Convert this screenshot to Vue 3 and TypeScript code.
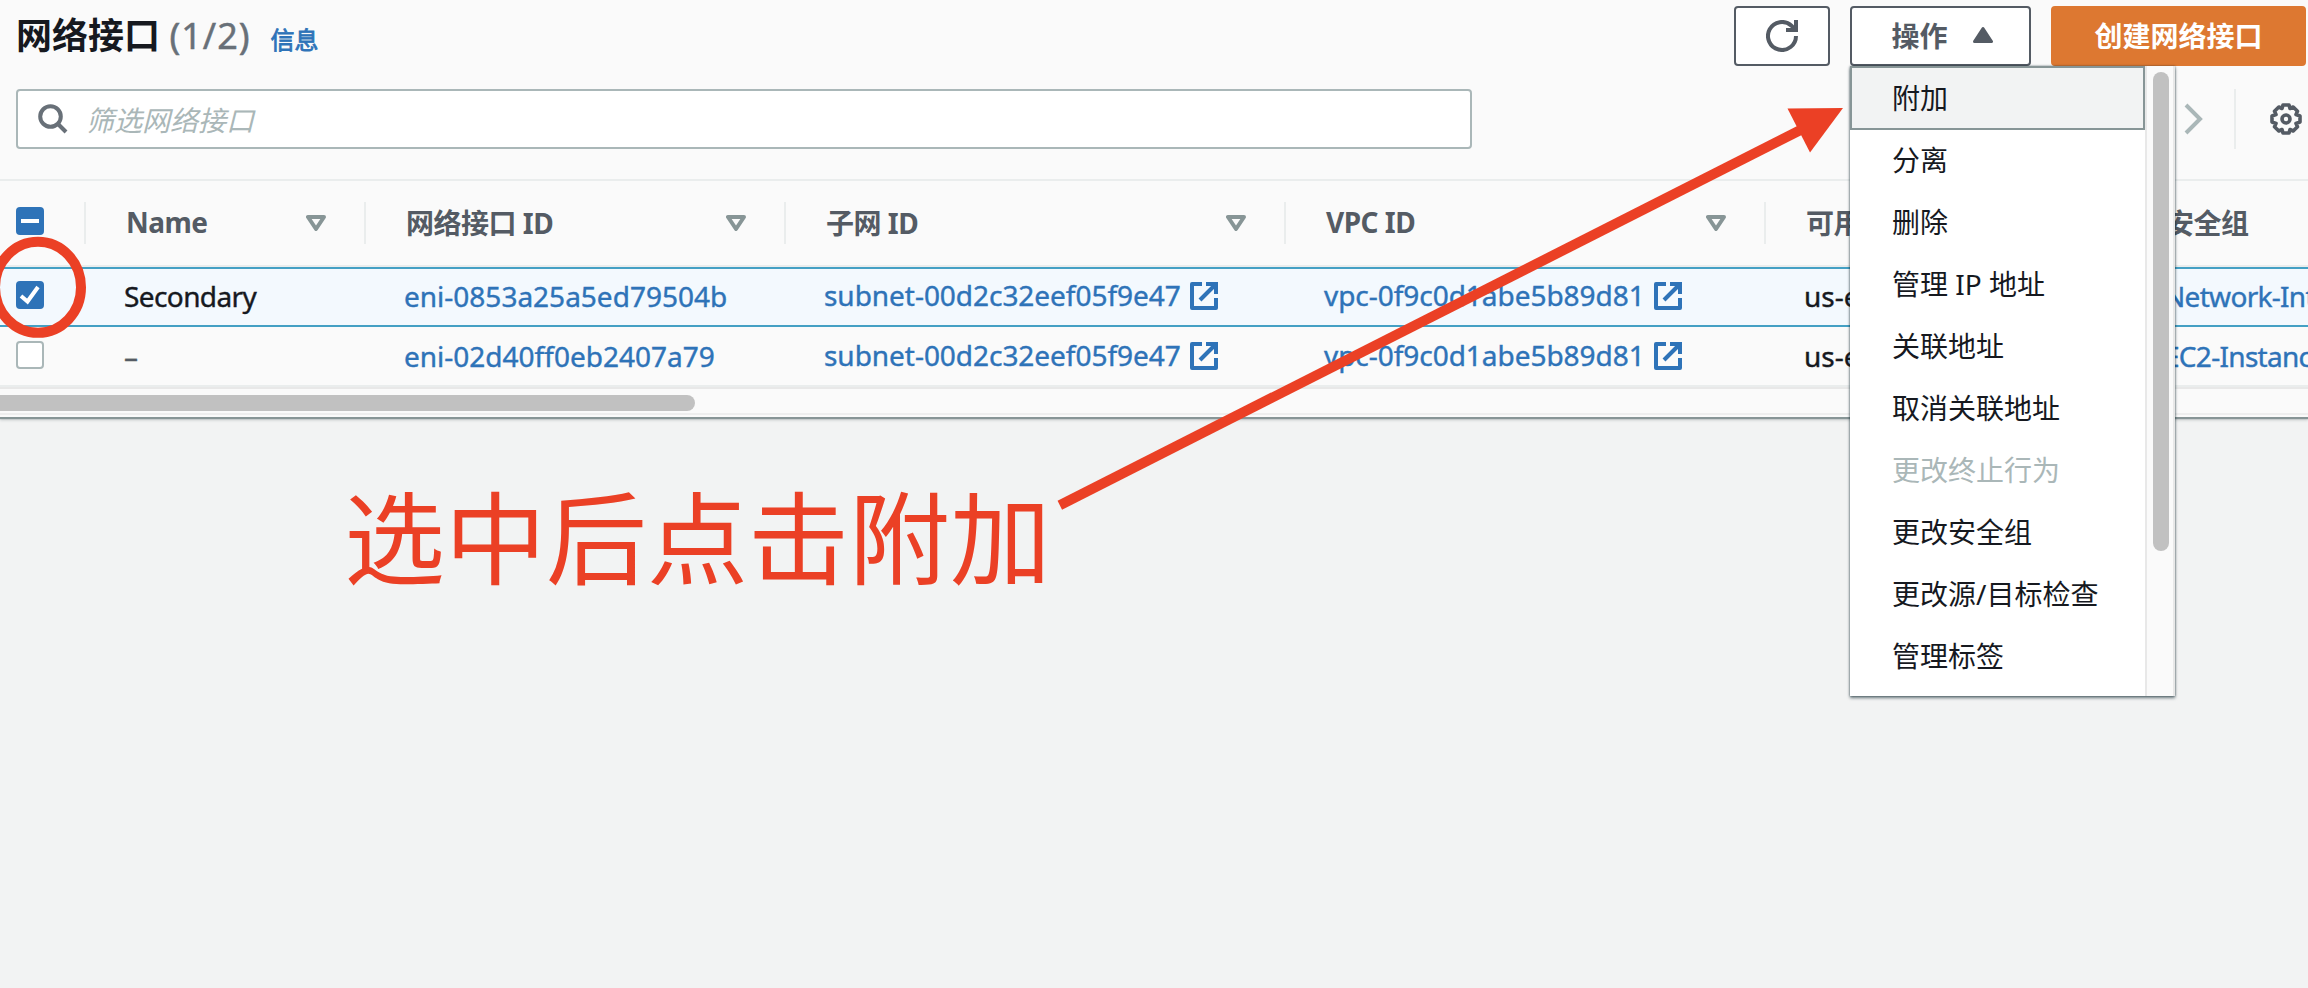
<script setup lang="ts">
interface Column {
  label: string
  sortable: boolean
}

interface NetworkInterface {
  id: string
  name: string
  subnet: string
  vpc: string
  zone: string
  group: string
  selected: boolean
}

interface MenuItem {
  label: string
  active?: boolean
  disabled?: boolean
}

const columns: Column[] = [
  { label: 'Name', sortable: true },
  { label: '网络接口 ID', sortable: true },
  { label: '子网 ID', sortable: true },
  { label: 'VPC ID', sortable: true },
  { label: '可用区', sortable: true },
  { label: '安全组', sortable: false },
]

const rows: NetworkInterface[] = [
  {
    id: 'eni-0853a25a5ed79504b',
    name: 'Secondary',
    subnet: 'subnet-00d2c32eef05f9e47',
    vpc: 'vpc-0f9c0d1abe5b89d81',
    zone: 'us-east',
    group: 'Network-Interface',
    selected: true,
  },
  {
    id: 'eni-02d40ff0eb2407a79',
    name: '–',
    subnet: 'subnet-00d2c32eef05f9e47',
    vpc: 'vpc-0f9c0d1abe5b89d81',
    zone: 'us-east',
    group: 'EC2-Instance',
    selected: false,
  },
]

const menu: MenuItem[] = [
  { label: '附加', active: true },
  { label: '分离' },
  { label: '删除' },
  { label: '管理 IP 地址' },
  { label: '关联地址' },
  { label: '取消关联地址' },
  { label: '更改终止行为', disabled: true },
  { label: '更改安全组' },
  { label: '更改源/目标检查' },
  { label: '管理标签' },
]
</script>

<template>
  <div class="page">
    <section class="panel">
      <header class="head">
        <h1 class="title">网络接口 <span class="count">(1/2)</span></h1>
        <a class="info">信息</a>
        <div class="actions">
          <button class="btn refresh" aria-label="refresh">
            <svg width="32" height="32" viewBox="0 0 32 32" fill="none" stroke="#545b64" stroke-width="4">
              <path d="M30 16A14 14 0 1 1 25.500 5.700L29 9.500" />
              <path d="M30 0V10H20" />
            </svg>
          </button>
          <div class="dropdown">
            <button class="btn toggle">
              操作
              <svg width="20" height="18" viewBox="0 0 20 18">
                <path d="M10 2.500L18.500 15.500H1.500Z" fill="#545b64" stroke="#545b64" stroke-width="3" stroke-linejoin="round" />
              </svg>
            </button>
            <div class="menu">
              <ul class="items">
                <li v-for="m in menu" :key="m.label" class="item" :class="{ active: m.active, disabled: m.disabled }">
                  {{ m.label }}
                </li>
              </ul>
              <div class="track"><div class="thumb"></div></div>
            </div>
          </div>
          <button class="btn primary">创建网络接口</button>
        </div>
      </header>

      <div class="tools">
        <div class="search">
          <svg width="30" height="30" viewBox="0 0 30 30" fill="none" stroke="#687078" stroke-width="4">
            <circle cx="12.500" cy="12.500" r="10.300" />
            <path d="M19.500 19.500L28 28" />
          </svg>
          <span class="placeholder">筛选网络接口</span>
        </div>
        <div class="prefs">
          <svg width="20" height="32" viewBox="0 0 20 32" fill="none" stroke="#aab7b8" stroke-width="4">
            <path d="M2 2L16 16L2 30" />
          </svg>
          <div class="divider"></div>
          <svg width="32" height="32" viewBox="0 0 32 32" fill="none" stroke="#545b64" stroke-width="3.600" stroke-linejoin="round">
            <path d="M13 2h6l1 3.500 3.200-1.500 4.300 4.300-1.500 3.200 4 1.500v6l-4 1.500 1.500 3.200-4.300 4.300-3.200-1.500-1 3.500h-6l-1-3.500-3.200 1.500-4.300-4.300 1.500-3.200-4-1.500v-6l4-1.500-1.500-3.200 4.300-4.300 3.200 1.500Z" />
            <circle cx="16" cy="16" r="4" />
          </svg>
        </div>
      </div>

      <div class="table">
        <div class="row thead">
          <div class="cell check">
            <span class="box on">
              <svg width="28" height="28" viewBox="0 0 28 28"><path d="M5 14H23" stroke="#fff" stroke-width="4" /></svg>
            </span>
          </div>
          <div v-for="c in columns" :key="c.label" class="cell th">
            <span class="label">{{ c.label }}</span>
            <svg v-if="c.sortable" width="20" height="16" viewBox="0 0 20 16">
              <path d="M2 2H18L10 14Z" fill="none" stroke="#879596" stroke-width="4" stroke-linejoin="round" />
            </svg>
          </div>
        </div>
        <div v-for="r in rows" :key="r.id" class="row body" :class="{ selected: r.selected }">
          <div class="cell check">
            <span class="box" :class="{ on: r.selected }">
              <svg v-if="r.selected" width="28" height="28" viewBox="0 0 28 28">
                <path d="M5 15L11.500 20.500L22 6" fill="none" stroke="#fff" stroke-width="4" />
              </svg>
            </span>
          </div>
          <div class="cell td">
            <span class="name" :class="{ empty: r.name === '–' }">{{ r.name }}</span>
          </div>
          <div class="cell td"><a class="eni">{{ r.id }}</a></div>
          <div v-for="link in [r.subnet, r.vpc]" :key="link" class="cell td raised">
            <a>{{ link }}</a>
            <svg width="28" height="28" viewBox="0 0 28 28" fill="none" stroke="#2e73b8" stroke-width="4">
              <path d="M12 2H2V26H26V16" stroke-linejoin="round" />
              <path d="M16 2H26V12" />
              <path d="M25.500 2.500L10 18" />
            </svg>
          </div>
          <div class="cell td"><span>{{ r.zone }}</span></div>
          <div class="cell td"><a class="group">{{ r.group }}</a></div>
        </div>
      </div>
      <div class="hscroll"><div class="hthumb"></div></div>
    </section>

    <div class="note">选中后点击附加</div>
    <svg class="marks" width="2308" height="988" viewBox="0 0 2308 988">
      <ellipse cx="38" cy="287.300" rx="43" ry="45.500" fill="none" stroke="#eb4025" stroke-width="10" />
      <path d="M1059.800 505.200L1801 129.800" stroke="#eb4025" stroke-width="10" />
      <path d="M1843 108L1787.500 108.500L1810 152.500Z" fill="#eb4025" />
    </svg>
  </div>
</template>

<style>
body {
  margin: 0;
  background: #f2f3f3;
}
</style>

<style scoped>
.page {
  position: relative;
  width: 2308px;
  height: 988px;
  overflow: hidden;
  background: #f2f3f3;
  color: #16191f;
  font-family: "Noto Sans", "Noto Sans CJK SC", sans-serif;
  font-size: 28px;
}
.panel {
  height: 417px;
  background: #fafafa;
  box-shadow: 0 2px 1px #879596, 0 3px 3px rgba(0, 28, 36, 0.2);
}
.head {
  display: flex;
  align-items: flex-start;
  height: 83px;
  padding: 6px 2px 0 16px;
  box-sizing: border-box;
}
.title {
  margin: 0;
  font-size: 36px;
  line-height: 60px;
  font-weight: 700;
  white-space: pre;
}
.count {
  font-weight: 400;
  letter-spacing: 1px;
  color: #687078;
  -webkit-text-stroke: 0.5px #687078;
}
.info {
  margin-left: 20px;
  font-size: 24px;
  line-height: 68px;
  color: #2e73b8;
  -webkit-text-stroke: 0.8px #2e73b8;
}
.actions {
  display: flex;
  gap: 20px;
  margin-left: auto;
}
.btn {
  display: flex;
  align-items: center;
  justify-content: center;
  height: 60px;
  box-sizing: border-box;
  padding: 0 0 2px;
  border: 2px solid #545b64;
  border-radius: 4px;
  background: #fff;
  color: #545b64;
  font: inherit;
  font-weight: 700;
}
.refresh {
  width: 96px;
  padding: 0;
}
.toggle {
  width: 181px;
  padding-left: 3px;
  gap: 25px;
}
.primary {
  width: 255px;
  border-color: #dd7831;
  background: #dd7831;
  color: #fff;
}
.dropdown {
  position: relative;
}
.menu {
  position: absolute;
  z-index: 2;
  top: 60px;
  left: 0;
  display: flex;
  width: 325px;
  height: 630px;
  background: #fff;
  box-shadow: 0 2px 3px rgba(0, 28, 36, 0.55), 0 0 2px rgba(0, 28, 36, 0.5);
}
.items {
  flex: 1;
  margin: 0;
  padding: 0;
  list-style: none;
}
.item {
  height: 62px;
  padding-left: 42px;
  line-height: 60px;
  border: 0 solid #879596;
}
.item.active {
  height: 60px;
  padding-left: 40px;
  line-height: 60px;
  border-width: 2px;
  background: #f2f3f3;
}
.item.disabled {
  color: #aab7b8;
}
.track {
  width: 30px;
  padding: 6px 0 0 6px;
  border-left: 2px solid #e8e8e8;
  border-right: 2px solid #e8e8e8;
  box-sizing: border-box;
  background: #fafafa;
}
.thumb {
  width: 16px;
  height: 479px;
  border-radius: 8px;
  background: #c1c1c1;
}
.tools {
  display: flex;
  justify-content: space-between;
  height: 96px;
  padding: 6px 6px 0 16px;
  box-sizing: border-box;
}
.search {
  display: flex;
  align-items: center;
  gap: 18px;
  width: 1456px;
  height: 60px;
  padding-left: 20px;
  box-sizing: border-box;
  border: 2px solid #aab7b8;
  border-radius: 4px;
  background: #fff;
}
.placeholder {
  padding-bottom: 1px;
  color: #aab7b8;
  font-style: italic;
}
.prefs {
  display: flex;
  align-items: center;
  height: 60px;
}
.divider {
  width: 2px;
  height: 60px;
  margin: 0 34px 0 30px;
  background: #eaeded;
}
.table {
  width: 2486px;
  border-top: 2px solid #eaeded;
}
.row {
  display: grid;
  grid-template-columns: 86px 280px 420px 500px 480px 360px 360px;
}
.cell {
  display: flex;
  align-items: center;
  white-space: nowrap;
}
.thead {
  height: 84px;
  border-bottom: 2px solid #eaeded;
  color: #545b64;
  font-weight: 700;
}
.thead .cell {
  height: 42px;
  margin-top: 21px;
  border-right: 2px solid #eaeded;
  box-sizing: border-box;
}
.th {
  justify-content: space-between;
  padding: 0 38px 0 40px;
}
.label {
  padding-bottom: 2px;
  letter-spacing: -0.5px;
}
.check {
  padding-left: 16px;
}
.thead .check {
  padding-bottom: 4px;
}
.box {
  width: 28px;
  height: 28px;
  box-sizing: border-box;
  border: 2px solid #aab7b8;
  border-radius: 4px;
  background: #fff;
}
.box.on {
  border: 0;
  background: #2e73b8;
}
.box svg {
  display: block;
}
.body {
  height: 58px;
  border-bottom: 2px solid #eaeded;
  -webkit-text-stroke: 0.4px currentColor;
}
.body.selected {
  height: 54px;
  padding-bottom: 2px;
  border-top: 2px solid #44a0c4;
  border-bottom-color: #44a0c4;
  background: #f3f9fe;
}
.body .check {
  padding-bottom: 2px;
}
.td {
  padding-left: 38px;
}
.td a {
  color: #2e73b8;
}
.name {
  letter-spacing: -0.6px;
}
.name.empty {
  color: #545b64;
}
.group {
  letter-spacing: -0.7px;
}
.raised {
  gap: 9px;
}
.raised a {
  padding-bottom: 3px;
  letter-spacing: -0.04px;
}
.hscroll {
  height: 28px;
  padding-top: 6px;
  box-sizing: border-box;
  border-top: 2px solid #e8e8e8;
  border-bottom: 2px solid #eeeeee;
}
.hthumb {
  width: 695px;
  height: 16px;
  border-radius: 0 8px 8px 0;
  background: #c1c1c1;
}
.note {
  position: absolute;
  left: 344px;
  top: 460px;
  color: #eb4025;
  font-family: "Noto Sans CJK SC", sans-serif;
  font-size: 101px;
  line-height: 146px;
  white-space: nowrap;
}
.marks {
  position: absolute;
  z-index: 3;
  left: 0;
  top: 0;
}
</style>
